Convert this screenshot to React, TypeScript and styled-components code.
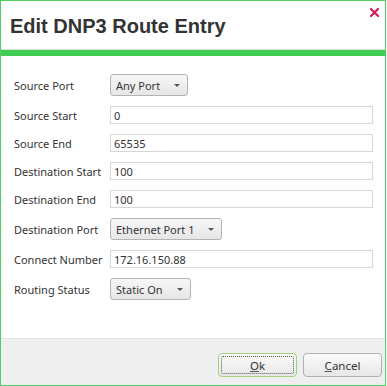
import React from 'react';
import styled, { createGlobalStyle } from 'styled-components';

const GlobalStyle = createGlobalStyle`
    body {
        margin: 0;
        background: #ffffff;
    }
`;

const Dialog = styled.div`
    width: 386px;
    height: 386px;
    box-sizing: border-box;
    border: 1px solid #4fd061;
    display: flex;
    flex-direction: column;
    background: #ffffff;
    font-family: 'Noto Sans', 'Open Sans', sans-serif;
`;

const TitleBar = styled.div`
    position: relative;
    height: 49px;
    display: flex;
    align-items: center;
    padding: 3px 0 0 9px;
    box-sizing: border-box;
    border-bottom: 1px solid #dcdcdc;
`;

const Title = styled.div`
    font-family: 'Liberation Sans', Arial, sans-serif;
    font-weight: bold;
    font-size: 20px;
    color: #333333;
    white-space: nowrap;
`;

const CloseButton = styled.button`
    position: absolute;
    top: 6px;
    right: 5px;
    width: 11px;
    height: 11px;
    padding: 0;
    margin: 0;
    border: 0;
    background: transparent;
    display: flex;
    align-items: center;
    justify-content: center;
    cursor: pointer;
`;

const GreenBar = styled.div`
    height: 6px;
    background: #42cd55;
`;

const Body = styled.div`
    flex: 1;
    display: grid;
    grid-template-columns: 96px 1fr;
    row-gap: 10px;
    align-content: start;
    align-items: center;
    padding: 18px 12px 0 13px;
`;

const Label = styled.div`
    font-size: 11px;
    line-height: 15px;
    color: #333333;
    white-space: nowrap;
`;

const Control = styled.div`
    display: flex;
`;

const Input = styled.input`
    display: block;
    height: 18px;
    box-sizing: border-box;
    width: 100%;
    margin: 0;
    border: 1px solid #d6d6d6;
    padding: 0 3px;
    font-family: inherit;
    font-size: 11px;
    color: #333333;
    background: #ffffff;
    outline: none;
`;

const Select = styled.div<{ $width: number }>`
    width: ${p => p.$width}px;
    height: 22px;
    box-sizing: border-box;
    border: 1px solid #b4b4b4;
    border-radius: 3px;
    background: linear-gradient(#f7f7f7, #e6e6e6);
    display: flex;
    align-items: center;
    justify-content: space-between;
    padding: 0 7px 0 5px;
    font-size: 11px;
    color: #333333;
    white-space: nowrap;
`;

const Arrow = styled.span`
    width: 0;
    height: 0;
    border-left: 3px solid transparent;
    border-right: 3px solid transparent;
    border-top: 3px solid #555555;
`;

const Footer = styled.div`
    height: 47px;
    box-sizing: border-box;
    border-top: 1px solid #e3e3e3;
    background: #efefef;
    display: flex;
    justify-content: flex-end;
    align-items: flex-start;
    gap: 6px;
    padding: 14px 3px 0 0;
`;

const Button = styled.button<{ $focused?: boolean }>`
    position: relative;
    width: 79px;
    height: 24px;
    box-sizing: border-box;
    margin: 0;
    padding: 0;
    border: 1px solid ${p => (p.$focused ? '#a3d27e' : '#b0b0b0')};
    border-radius: 4px;
    background: linear-gradient(#fbfbfb, #e7e7e7);
    font-family: inherit;
    font-size: 11.5px;
    color: #333333;
    cursor: pointer;
    &::after {
        content: '';
        display: ${p => (p.$focused ? 'block' : 'none')};
        position: absolute;
        inset: 2px;
        border: 1px dotted #555555;
        border-radius: 2px;
    }
    u {
        text-decoration-color: #555555;
    }
`;

const Row = ({ label, children }: { label: string; children: React.ReactNode }) => (
    <>
        <Label>{label}</Label>
        <Control>{children}</Control>
    </>
);

const Dropdown = ({ value, width }: { value: string; width: number }) => (
    <Select $width={width}>
        <span>{value}</span>
        <Arrow />
    </Select>
);

export default function App() {
    return (
        <>
            <GlobalStyle />
            <Dialog>
                <TitleBar>
                    <Title>Edit DNP3 Route Entry</Title>
                    <CloseButton aria-label="Close">
                        <svg width="9" height="9" viewBox="0 0 9 9">
                            <path d="M1 1 L8 8 M8 1 L1 8" stroke="#d41a5c" strokeWidth="2.2" strokeLinecap="square" />
                        </svg>
                    </CloseButton>
                </TitleBar>
                <GreenBar />
                <Body>
                    <Row label="Source Port"><Dropdown value="Any Port" width={78} /></Row>
                    <Row label="Source Start"><Input defaultValue="0" /></Row>
                    <Row label="Source End"><Input defaultValue="65535" /></Row>
                    <Row label="Destination Start"><Input defaultValue="100" /></Row>
                    <Row label="Destination End"><Input defaultValue="100" /></Row>
                    <Row label="Destination Port"><Dropdown value="Ethernet Port 1" width={112} /></Row>
                    <Row label="Connect Number"><Input defaultValue="172.16.150.88" /></Row>
                    <Row label="Routing Status"><Dropdown value="Static On" width={81} /></Row>
                </Body>
                <Footer>
                    <Button $focused><u>O</u>k</Button>
                    <Button><u>C</u>ancel</Button>
                </Footer>
            </Dialog>
        </>
    );
}
